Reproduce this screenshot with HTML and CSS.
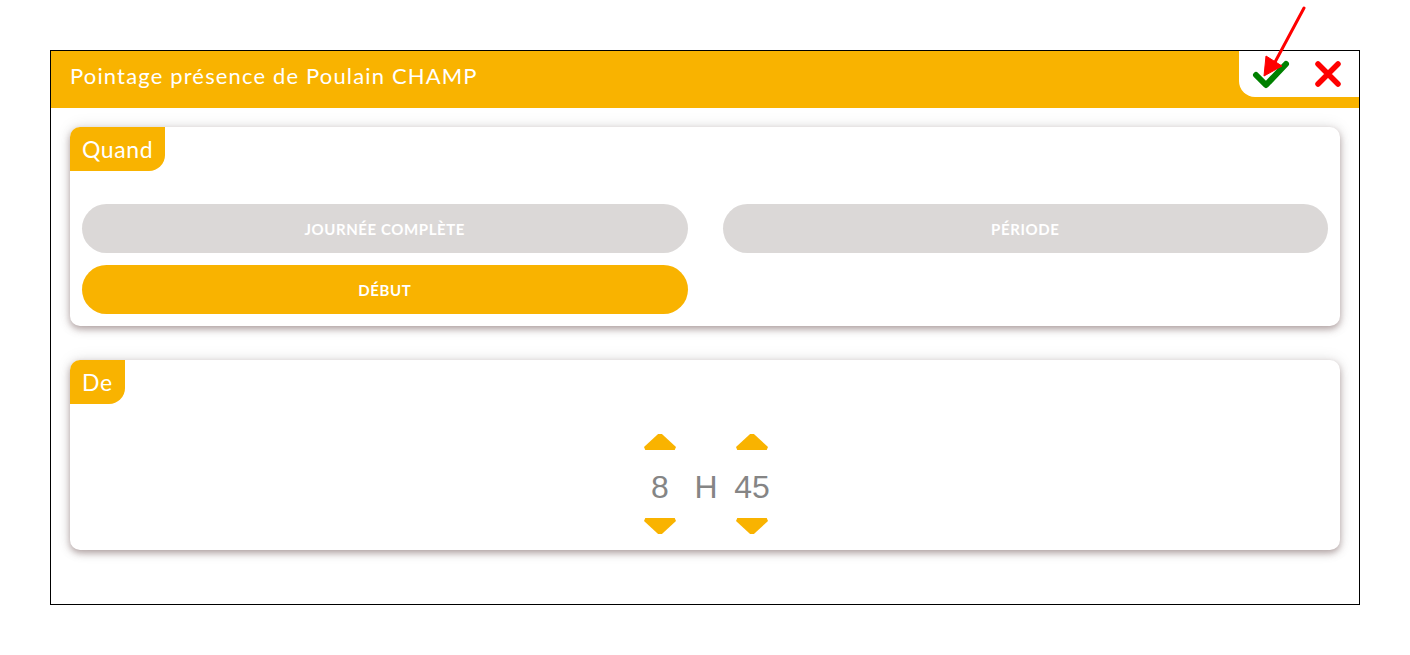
FILE: index.html
```html
<!DOCTYPE html>
<html lang="fr">
<head>
    <meta charset="UTF-8">
    <title>Pointage présence</title>
    <link rel="stylesheet" href="styles.css">
</head>
<body>

<div class="dialog">

    <!-- title bar with validate / cancel -->
    <header class="dialog-header">
        <h1 class="dialog-title">Pointage présence de Poulain CHAMP</h1>
        <div class="dialog-actions">
            <button class="icon-btn" title="Valider">
                <svg width="38" height="30" viewBox="0 0 38 30">
                    <path d="M4 16 L14 26 L34 5" fill="none" stroke="#008000" stroke-width="6" stroke-linecap="round" stroke-linejoin="round"/>
                </svg>
            </button>
            <button class="icon-btn" title="Annuler">
                <svg width="28" height="26" viewBox="0 0 28 26">
                    <path d="M4 3 L24 23 M24 3 L4 23" fill="none" stroke="#ff0000" stroke-width="5.5" stroke-linecap="round"/>
                </svg>
            </button>
        </div>
    </header>

    <div class="dialog-body">

        <!-- when -->
        <section class="card">
            <div class="card-label">Quand</div>
            <div class="choice-grid">
                <button class="choice">Journée complète</button>
                <button class="choice">Période</button>
                <button class="choice choice-active">Début</button>
            </div>
        </section>

        <!-- from -->
        <section class="card card-time">
            <div class="card-label">De</div>
            <div class="time-picker">
                <div class="time-col">
                    <span class="arrow arrow-up"></span>
                    <span class="time-value">8</span>
                    <span class="arrow arrow-down"></span>
                </div>
                <div class="time-col">
                    <span class="time-value">H</span>
                </div>
                <div class="time-col">
                    <span class="arrow arrow-up"></span>
                    <span class="time-value">45</span>
                    <span class="arrow arrow-down"></span>
                </div>
            </div>
        </section>

    </div>
</div>

<!-- red annotation arrow pointing at the check -->
<svg class="annotation" width="60" height="80" viewBox="0 0 60 80">
    <path d="M52 2 L22 58" stroke="#ff0000" stroke-width="3" stroke-linecap="round"/>
    <path d="M12 70 L14 50 L30 60 Z" fill="#ff0000" stroke="#ff0000" stroke-width="1" stroke-linejoin="round"/>
</svg>

</body>
</html>
```

FILE: styles.css
```css
body {
    margin: 0;
    background-color: white;
    font-family: Lato, "Noto Sans", sans-serif;
}

.dialog {
    margin: 50px 0 0 50px;
    width: 1308px;
    height: 553px;
    border: 1px solid black;
    display: flex;
    flex-direction: column;
}

.dialog-header {
    height: 57px;
    background-color: #f9b300;
    display: flex;
    justify-content: space-between;
    align-items: flex-start;
}

.dialog-title {
    margin: 0;
    padding: 11px 0 0 19px;
    font-size: 22px;
    font-weight: normal;
    color: white;
    letter-spacing: 1.15px;
}

.dialog-actions {
    width: 120px;
    height: 46px;
    background-color: white;
    border-bottom-left-radius: 16px;
    display: flex;
    align-items: center;
    padding-left: 13px;
    box-sizing: border-box;
    gap: 24px;
}

.icon-btn {
    background: none;
    border: none;
    padding: 0;
    margin: 0;
    cursor: pointer;
    display: flex;
}

.dialog-body {
    padding: 19px 19px 0;
    display: flex;
    flex-direction: column;
    gap: 34px;
}

.card {
    background-color: white;
    border-radius: 10px;
    box-shadow: 0 3px 7px rgba(110, 80, 80, .5), 0 0 16px rgba(0, 0, 0, .1);
    overflow: hidden;
    padding-bottom: 12px;
}

.card-label {
    display: inline-block;
    height: 44px;
    padding: 0 12px;
    line-height: 44px;
    background-color: #f9b300;
    color: white;
    font-size: 23px;
    letter-spacing: .6px;
    border-bottom-right-radius: 16px;
}

.choice-grid {
    display: grid;
    grid-template-columns: 1fr 1fr;
    column-gap: 35px;
    row-gap: 12px;
    padding: 33px 12px 0;
}

.choice {
    height: 49px;
    border: none;
    border-radius: 25px;
    background-color: #dbd8d7;
    color: white;
    font-family: Lato, "Noto Sans", sans-serif;
    font-size: 15px;
    font-weight: bold;
    letter-spacing: .6px;
    text-transform: uppercase;
    cursor: pointer;
}

.choice-active {
    background-color: #f9b300;
}

.card-time {
    padding-bottom: 15px;
}

.time-picker {
    display: flex;
    justify-content: center;
    margin-top: 29px;
    padding-left: 2px;
}

.time-col {
    width: 46px;
    display: flex;
    flex-direction: column;
    align-items: center;
    justify-content: center;
}

.time-value {
    font-family: "Liberation Sans", Arial, sans-serif;
    font-size: 32px;
    color: #858585;
    line-height: 36px;
    margin: 19px 0 13px;
}

.arrow {
    width: 32px;
    height: 17px;
    background-color: #f9b300;
}

.arrow-up {
    clip-path: polygon(44% 6%, 56% 6%, 100% 82%, 96% 100%, 4% 100%, 0 82%);
}

.arrow-down {
    clip-path: polygon(4% 0, 96% 0, 100% 18%, 56% 94%, 44% 94%, 0 18%);
}

.annotation {
    position: absolute;
    left: 1252px;
    top: 6px;
}
```
